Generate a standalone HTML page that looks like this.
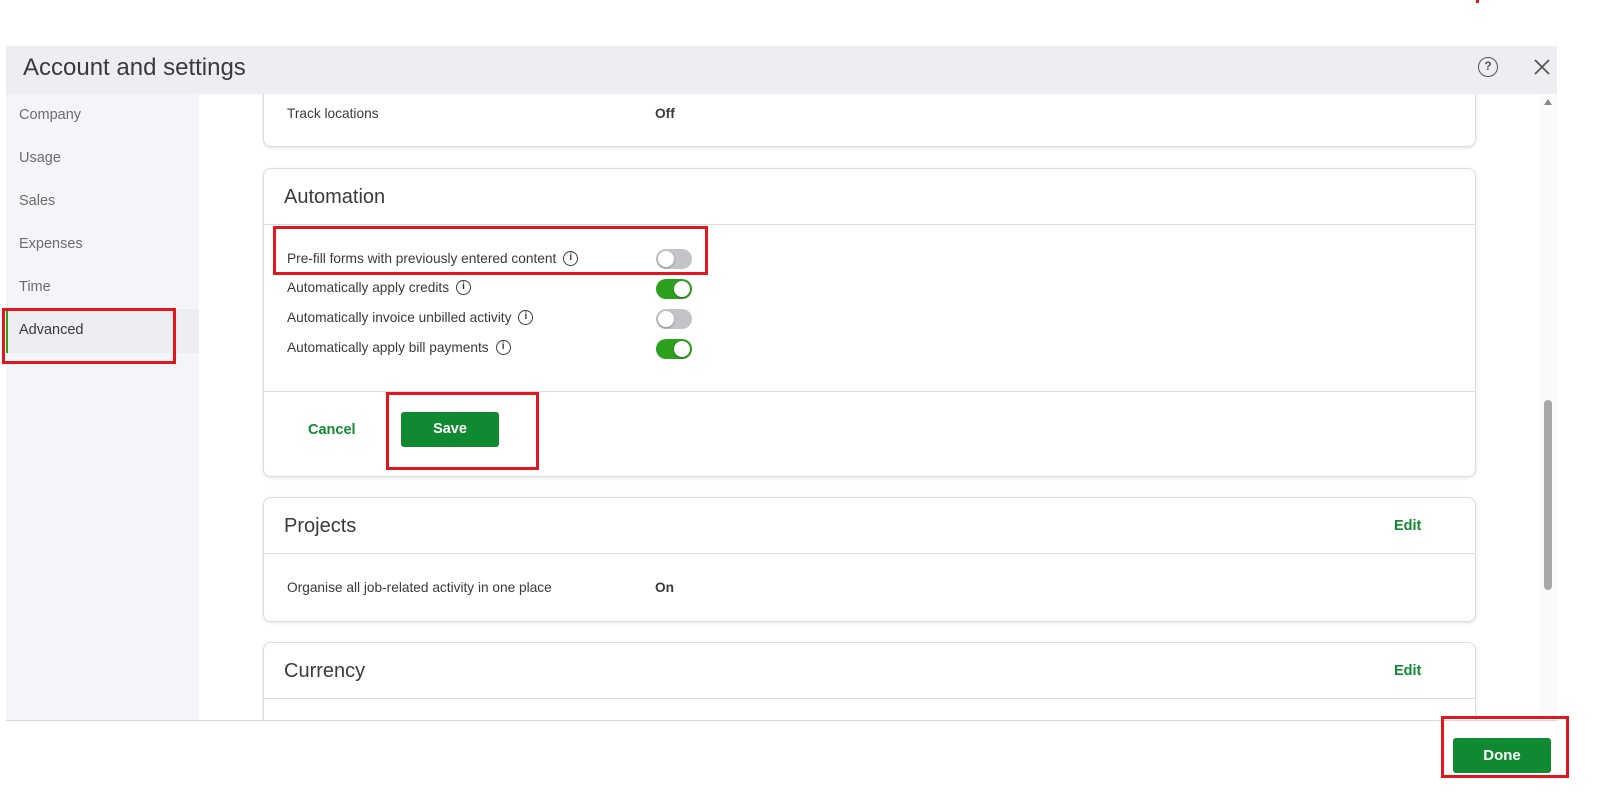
<!DOCTYPE html>
<html><head><style>
*{box-sizing:border-box;margin:0;padding:0}
body{width:1601px;height:795px;background:#fff;font-family:"Liberation Sans",sans-serif;position:relative;overflow:hidden;color:#393a3d}
.abs{position:absolute}
.hdr{left:6px;top:46px;width:1551px;height:48px;background:#eceef1}
.side{left:6px;top:94px;width:193px;height:627px;background:#f4f5f8}
.nav{position:absolute;left:13px;font-size:14.5px;color:#6b6c72}
.main{left:199px;top:94px;width:1341px;height:627px;background:#fff;overflow:hidden}
.sb{left:1540px;top:94px;width:17px;height:627px;background:#fafafa}
.card{position:absolute;left:64px;width:1213px;background:#fff;border:1px solid #dcdde0;border-radius:8px;box-shadow:0 1px 3px rgba(0,0,0,.12)}
.t{position:absolute;font-size:13.7px;color:#393a3d;display:flex;align-items:center;height:18px}
.h{position:absolute;left:20px;font-size:20px;color:#393a3d}
.line{position:absolute;left:0;right:0;height:1px;background:#dcdde0}
.edit{position:absolute;left:1130px;font-size:14.5px;font-weight:bold;color:#108a31}
.tg{position:absolute;left:392px;width:36px;height:20px;border-radius:10px}
.tg i{position:absolute;top:2px;width:16px;height:16px;border-radius:50%;background:#fff;box-shadow:0 1px 2px rgba(0,0,0,.3)}
.off{background:#c2c4c8}.off i{left:2px}
.on{background:#2ca01c}.on i{left:18px}
.info{display:inline-block;width:15px;height:15px;border:1.5px solid #393a3d;border-radius:50%;font-size:10px;font-weight:bold;text-align:center;line-height:12px;margin-left:7px}
.red{position:absolute;border:3px solid #e3161e}
.btn{position:absolute;background:#108a31;color:#fff;font-weight:bold;font-size:14.5px;text-align:center;border-radius:3px}
</style></head><body>
<div class="abs" style="left:1476px;top:0;width:3px;height:3px;background:#e3161e"></div>
<div class="abs hdr"><div style="position:absolute;left:17px;top:8px;font-size:24px;color:#393a3d">Account and settings</div>
<div style="position:absolute;left:1472px;top:11px;width:20px;height:20px;border:1.8px solid #555;border-radius:50%;font-size:12px;font-weight:bold;text-align:center;line-height:17px;color:#555">?</div>
<svg style="position:absolute;left:1528px;top:13px" width="16" height="16" viewBox="0 0 16 16"><path d="M1 1L15 15M15 1L1 15" stroke="#555" stroke-width="1.8"/></svg></div>
<div class="abs side">
<div class="nav" style="top:13px">Company</div>
<div class="nav" style="top:56px">Usage</div>
<div class="nav" style="top:99px">Sales</div>
<div class="nav" style="top:142px">Expenses</div>
<div class="nav" style="top:185px">Time</div>
<div style="position:absolute;left:0;top:215px;width:193px;height:44px;background:#eceef1;border-left:2px solid #2ca01c"></div>
<div class="nav" style="top:228px;color:#393a3d">Advanced</div>
</div>
<div class="abs main">
<div class="card" style="top:-20px;height:73px"><div class="t" style="left:23px;top:29px">Track locations</div><div class="t" style="left:391px;top:29px;font-weight:bold">Off</div></div>
<div class="card" style="top:74px;height:309px">
<div class="h" style="top:17px">Automation</div>
<div class="line" style="top:55px"></div>
<div class="t" style="left:23px;top:80px">Pre-fill forms with previously entered content<span class="info">i</span></div>
<div class="tg off" style="top:80px"><i></i></div>
<div class="t" style="left:23px;top:109px">Automatically apply credits<span class="info">i</span></div>
<div class="tg on" style="top:110px"><i></i></div>
<div class="t" style="left:23px;top:139px">Automatically invoice unbilled activity<span class="info">i</span></div>
<div class="tg off" style="top:140px"><i></i></div>
<div class="t" style="left:23px;top:169px">Automatically apply bill payments<span class="info">i</span></div>
<div class="tg on" style="top:170px"><i></i></div>
<div class="line" style="top:222px"></div>
<div style="position:absolute;left:44px;top:253px;font-size:14.5px;font-weight:bold;color:#108a31">Cancel</div>
<div class="btn" style="left:137px;top:243px;width:98px;height:35px;line-height:35px">Save</div>
</div>
<div class="card" style="top:403px;height:125px">
<div class="h" style="top:17px">Projects</div><div class="edit" style="top:20px">Edit</div>
<div class="line" style="top:55px"></div>
<div class="t" style="left:23px;top:80px">Organise all job-related activity in one place</div><div class="t" style="left:391px;top:80px;font-weight:bold">On</div>
</div>
<div class="card" style="top:548px;height:120px">
<div class="h" style="top:17px">Currency</div><div class="edit" style="top:20px">Edit</div>
<div class="line" style="top:55px"></div>
</div>
</div>
<div class="abs sb"><div style="position:absolute;left:4px;top:5px;width:0;height:0;border-left:4px solid transparent;border-right:4px solid transparent;border-bottom:6px solid #888"></div>
<div style="position:absolute;left:4px;top:306px;width:8px;height:190px;background:#a8a8a8;border-radius:4px"></div></div>
<div class="abs" style="left:6px;top:720px;width:1551px;height:1px;background:#d4d7dc"></div>
<div class="red" style="left:2px;top:308px;width:174px;height:56px"></div>
<div class="red" style="left:273px;top:226px;width:435px;height:49px"></div>
<div class="red" style="left:386px;top:392px;width:153px;height:78px"></div>
<div class="red" style="left:1441px;top:716px;width:128px;height:62px"></div>
<div class="btn" style="left:1453px;top:738px;width:98px;height:35px;line-height:35px;font-size:15px">Done</div>
</body></html>
